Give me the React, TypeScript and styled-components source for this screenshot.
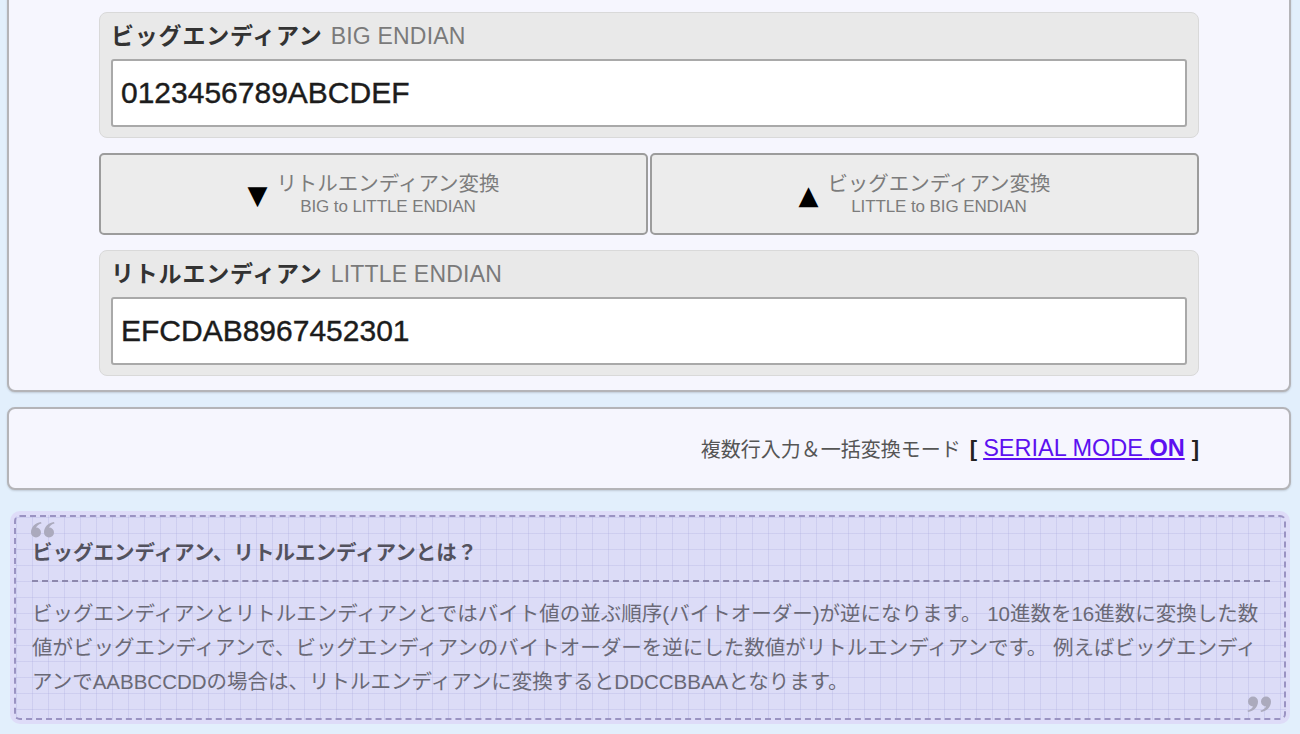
import React from "react";
import styled, { createGlobalStyle } from "styled-components";

const GlobalStyle = createGlobalStyle`
  html, body {
    margin: 0;
    padding: 0;
    background: #e2effc;
    font-family: "Liberation Sans", "Noto Sans CJK JP", sans-serif;
  }
  * { box-sizing: border-box; }
`;

const Page = styled.div`
  display: flex;
  flex-direction: column;
  padding: 0 9px 0 7px;
  height: 734px;
  overflow: hidden;
`;

const Card = styled.section<{ $top?: boolean }>`
  background: #f6f6fe;
  border: 2px solid #b4b4b8;
  border-radius: 8px;
  box-shadow: 0 1px 2px rgba(0, 0, 0, 0.15);
  margin-top: ${(p) => (p.$top ? "-10px" : "15px")};
`;

const Converter = styled.div`
  max-width: 1100px;
  margin: 0 auto;
  padding: 20px 0 14px;
  display: flex;
  flex-direction: column;
  gap: 15px;
`;

const Field = styled.div`
  background: #e9e9e9;
  border: 1px solid #d9d9d9;
  border-radius: 8px;
  padding: 9px 11px 10px;
`;

const Label = styled.div`
  font-size: 23px;
  line-height: 28px;
  height: 28px;
  margin-bottom: 9px;
  color: #333;
  font-weight: bold;
  letter-spacing: 0.8px;

  span {
    font-weight: normal;
    color: #7a7a7a;
    letter-spacing: 0.2px;
    margin-left: 8px;
  }
`;

const ValueBox = styled.div`
  background: #fff;
  border: 2px solid #a9a9a9;
  border-radius: 3px;
  height: 68px;
  padding: 0 8px;
  display: flex;
  align-items: center;
  font-size: 30px;
  color: #1c1c1c;
  -webkit-text-stroke: 0.4px #1c1c1c;
`;

const ButtonRow = styled.div`
  display: flex;
  gap: 2px;
`;

const ConvertButton = styled.button`
  flex: 1;
  height: 82px;
  background: #ececec;
  border: 2px solid #9c9c9c;
  border-radius: 5px;
  display: flex;
  align-items: center;
  justify-content: center;
  gap: 9px;
  font-family: inherit;
  cursor: pointer;
  padding: 0;
`;

const Arrow = styled.span`
  font-size: 26px;
  color: #000;
  line-height: 1;
  font-family: "DejaVu Sans", sans-serif;
  margin-top: 2px;
`;

const ButtonText = styled.span`
  display: flex;
  flex-direction: column;
  align-items: center;
  color: #7c7c7c;
`;

const ButtonMain = styled.span`
  font-size: 20.5px;
  line-height: 25px;
`;

const ButtonSub = styled.span`
  font-size: 17px;
  line-height: 22px;
  letter-spacing: -0.1px;
`;

const ModeBar = styled.div`
  height: 79px;
  display: flex;
  align-items: center;
  justify-content: flex-end;
  padding-right: 90px;
  font-size: 20px;
  color: #555;
`;

const Bracket = styled.span`
  color: #222;
  font-weight: bold;
  font-size: 22px;
  margin: 0 6px 0 9px;

  &:last-child {
    margin: 0 0 0 7px;
  }
`;

const ModeLink = styled.a`
  color: #5c10f0;
  text-decoration: underline;
  font-size: 23.5px;

  b {
    font-weight: bold;
  }
`;

const Note = styled.aside`
  margin: 21px 1px 0 3px;
  background: #dedcf8;
  border-radius: 10px;
  padding: 4px;
`;

const NoteInner = styled.div`
  position: relative;
  border: 2px dashed #9a93c2;
  border-radius: 6px;
  padding: 22px 14px 19px 16px;
  background-color: #dcdcf7;
  background-image: linear-gradient(to right, rgba(180, 180, 225, 0.35) 1px, transparent 1px),
    linear-gradient(to bottom, rgba(180, 180, 225, 0.35) 1px, transparent 1px);
  background-size: 16px 16px;
`;

const QuoteMark = styled.svg<{ $end?: boolean }>`
  position: absolute;
  width: 26px;
  height: 17px;
  fill: #abaabd;
  ${(p) =>
    p.$end
      ? "right: 12px; bottom: 5px; transform: rotate(180deg);"
      : "left: 14px; top: 4px;"}
`;

const QuoteIcon = ({ end }: { end?: boolean }) => (
  <QuoteMark $end={end} viewBox="0 0 26 17" aria-hidden="true">
    <path d="M11 1 C5 2 1 6 1 11.5 A5 5 0 1 0 6 6.5 C7 4.5 9 3 11.5 2.4 Z" />
    <path d="M24 1 C18 2 14 6 14 11.5 A5 5 0 1 0 19 6.5 C20 4.5 22 3 24.5 2.4 Z" />
  </QuoteMark>
);

const NoteTitle = styled.h2`
  margin: 0;
  font-size: 20.5px;
  line-height: 28px;
  font-weight: bold;
  color: #53525e;
  padding-bottom: 13px;
  border-bottom: 2px dashed #8d88ad;
`;

const NoteBody = styled.p`
  margin: 15px 0 0;
  font-size: 20.5px;
  line-height: 34px;
  color: #6a6976;
  white-space: nowrap;
`;

export default function App() {
  return (
    <>
      <GlobalStyle />
      <Page>
        <Card $top>
          <Converter>
            <Field>
              <Label>
                ビッグエンディアン<span>BIG ENDIAN</span>
              </Label>
              <ValueBox>0123456789ABCDEF</ValueBox>
            </Field>
            <ButtonRow>
              <ConvertButton>
                <Arrow>▼</Arrow>
                <ButtonText>
                  <ButtonMain>リトルエンディアン変換</ButtonMain>
                  <ButtonSub>BIG to LITTLE ENDIAN</ButtonSub>
                </ButtonText>
              </ConvertButton>
              <ConvertButton>
                <Arrow>▲</Arrow>
                <ButtonText>
                  <ButtonMain>ビッグエンディアン変換</ButtonMain>
                  <ButtonSub>LITTLE to BIG ENDIAN</ButtonSub>
                </ButtonText>
              </ConvertButton>
            </ButtonRow>
            <Field>
              <Label>
                リトルエンディアン<span>LITTLE ENDIAN</span>
              </Label>
              <ValueBox>EFCDAB8967452301</ValueBox>
            </Field>
          </Converter>
        </Card>
        <Card>
          <ModeBar>
            複数行入力＆一括変換モード<Bracket>[</Bracket>
            <ModeLink href="#">
              SERIAL MODE <b>ON</b>
            </ModeLink>
            <Bracket>]</Bracket>
          </ModeBar>
        </Card>
        <Note>
          <NoteInner>
            <QuoteIcon />
            <NoteTitle>ビッグエンディアン、リトルエンディアンとは？</NoteTitle>
            <NoteBody>
              ビッグエンディアンとリトルエンディアンとではバイト値の並ぶ順序(バイトオーダー)が逆になります。 10進数を16進数に変換した数
              <br />
              値がビッグエンディアンで、ビッグエンディアンのバイトオーダーを逆にした数値がリトルエンディアンです。 例えばビッグエンディ
              <br />
              アンでAABBCCDDの場合は、リトルエンディアンに変換するとDDCCBBAAとなります。
            </NoteBody>
            <QuoteIcon end />
          </NoteInner>
        </Note>
      </Page>
    </>
  );
}
